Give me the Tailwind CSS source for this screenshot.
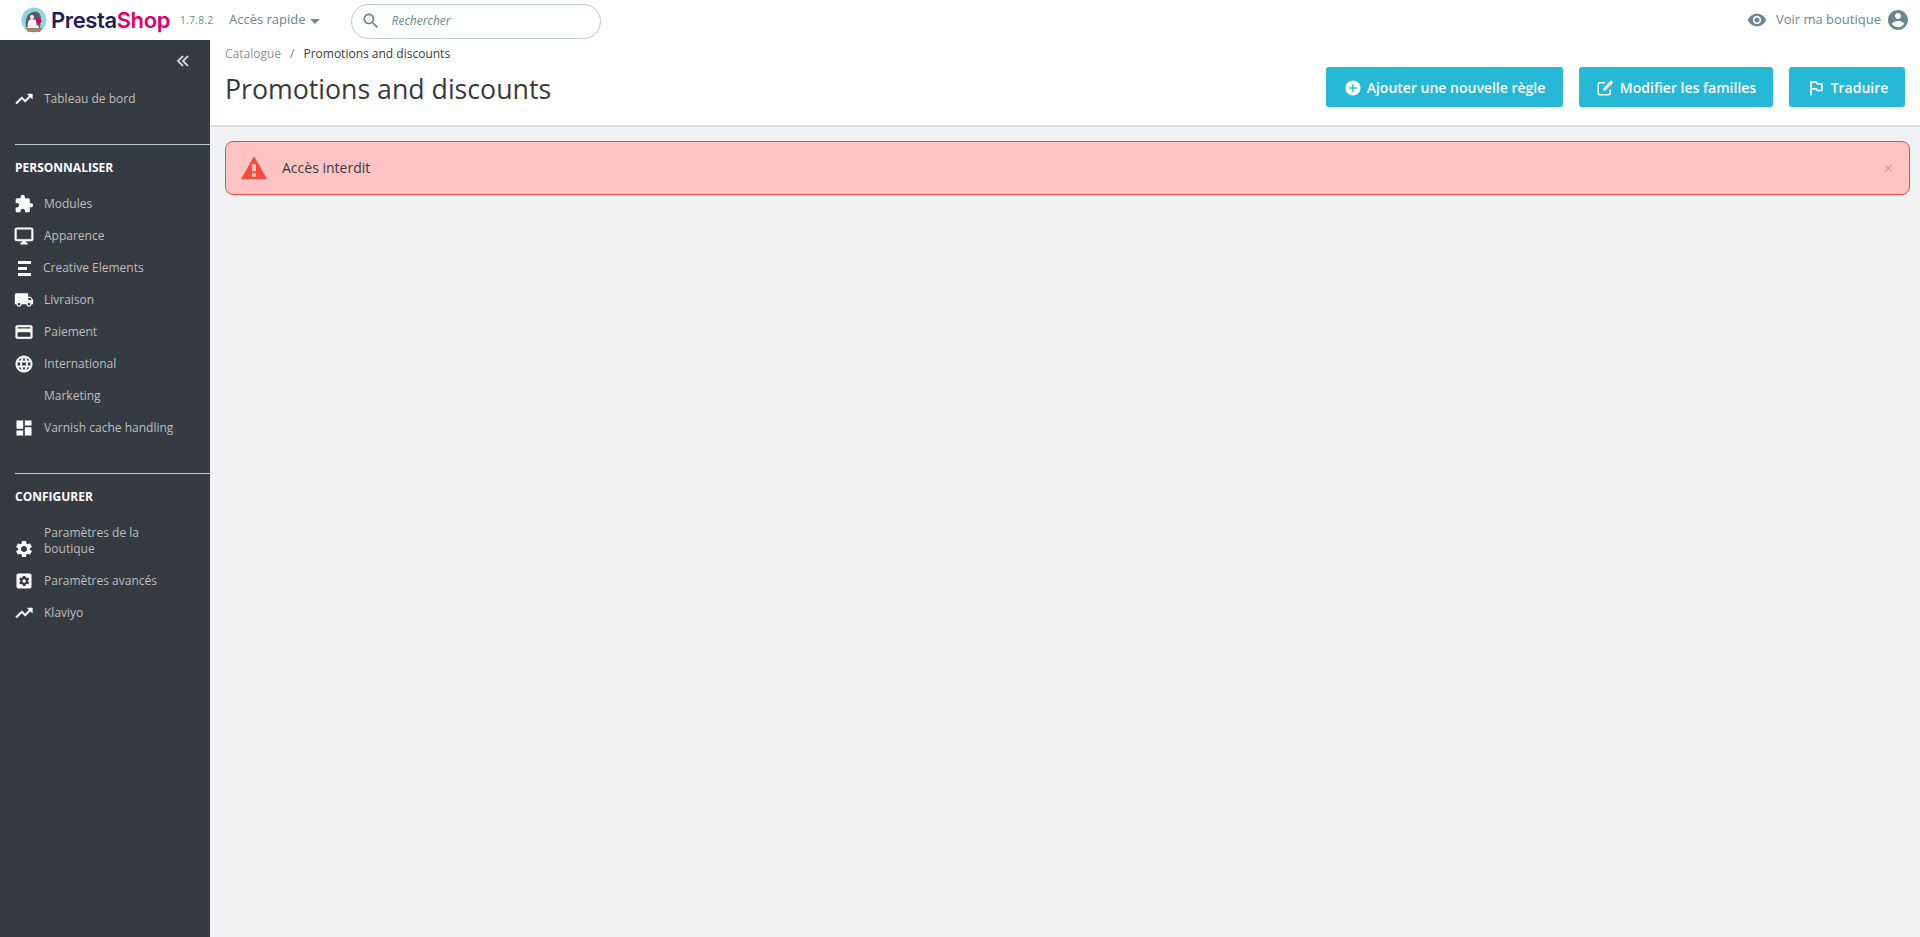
<!DOCTYPE html>
<html lang="fr">
<head>
    <meta charset="UTF-8">
    <meta name="viewport" content="width=device-width, initial-scale=1.0">
    <title>Promotions and discounts</title>
    <script src="https://cdn.jsdelivr.net/npm/@tailwindcss/browser@4"></script>
</head>
<body class="h-[937px] overflow-hidden bg-[#eff1f2] font-['Open_Sans',sans-serif] text-[#363a41]">
    <!-- Top bar -->
    <header class="flex h-10 items-center bg-white pr-[10px]">
        <svg class="ml-[21px] h-[26px] w-[26px] shrink-0" viewBox="0 0 26 26">
            <circle cx="13" cy="13" r="12.5" fill="#8fd3e4"/>
            <path d="M5 20c-1-7 1-14 7-15 5-1 8 2 8 6l-1 10z" fill="#5a5f66"/>
            <path d="M7 21c-1-4 0-8 3-9l6 1 2 8z" fill="#f3f3f3"/>
            <circle cx="11" cy="10" r="2" fill="#f3f3f3"/>
            <path d="M14 9l7 5-5 5z" fill="#df0067"/>
            <path d="M4 21h18l-3 4H7z" fill="#a0896b"/>
        </svg>
        <span class="ml-1 w-[122px] shrink-0 font-['Inter',sans-serif] text-[22px] leading-none font-semibold tracking-[-0.4px] text-[#251b5b]">Presta<span class="text-[#df0067]">Shop</span></span>
        <span class="ml-[7px] w-[49px] shrink-0 text-[10px] tracking-[0.4px] text-[#6c868e]">1.7.8.2</span>
        <button class="flex items-center text-[13px] text-[#6c868e]">Accès rapide<span class="ml-1 mt-0.5 border-x-[5px] border-t-[5px] border-x-transparent border-t-[#6c868e]"></span></button>
        <div class="mt-[2px] ml-[31px] flex h-[35px] w-[250px] items-center rounded-full border border-[#bbcdd2] pl-[9px]">
            <svg class="h-5 w-5 fill-[#6c868e]" viewBox="0 0 24 24"><path d="M15.5 14h-.79l-.28-.27C15.41 12.59 16 11.11 16 9.5 16 5.91 13.09 3 9.5 3S3 5.91 3 9.5 5.91 16 9.5 16c1.61 0 3.09-.59 4.23-1.57l.27.28v.79l5 4.99L20.49 19l-4.99-5zm-6 0C7.01 14 5 11.99 5 9.5S7.01 5 9.5 5 14 7.01 14 9.5 11.99 14 9.5 14z"/></svg>
            <span class="ml-[11px] text-xs text-[#6c868e] italic">Rechercher</span>
        </div>
        <div class="ml-auto flex items-center text-[13px] text-[#6c868e]">
            <svg class="mr-[9px] h-5 w-5 fill-[#6c868e]" viewBox="0 0 24 24"><path d="M12 4.5C7 4.5 2.73 7.61 1 12c1.73 4.39 6 7.5 11 7.5s9.27-3.11 11-7.5c-1.73-4.39-6-7.5-11-7.5zM12 17c-2.76 0-5-2.24-5-5s2.24-5 5-5 5 2.24 5 5-2.24 5-5 5zm0-8c-1.66 0-3 1.34-3 3s1.34 3 3 3 3-1.34 3-3-1.34-3-3-3z"/></svg>
            Voir ma boutique
            <svg class="ml-[5px] h-6 w-6 fill-[#6c868e]" viewBox="0 0 24 24"><path d="M12 2C6.48 2 2 6.48 2 12s4.48 10 10 10 10-4.48 10-10S17.52 2 12 2zm0 3c1.66 0 3 1.34 3 3s-1.34 3-3 3-3-1.34-3-3 1.34-3 3-3zm0 14.2c-2.5 0-4.71-1.28-6-3.22.03-1.99 4-3.08 6-3.08 1.99 0 5.97 1.09 6 3.08-1.29 1.94-3.5 3.22-6 3.22z"/></svg>
        </div>
    </header>

    <div class="flex h-[897px]">
        <!-- Sidebar -->
        <aside class="w-[210px] shrink-0 bg-[#363a41] text-xs text-[#bebebe]">
            <div class="flex h-[43px] items-end justify-end pr-[20px] pb-[15px]">
                <svg class="h-[14px] w-[14px] fill-none stroke-[#d0d0d0] stroke-[2]" viewBox="0 0 14 14"><path d="M7 2L2 7l5 5M12 2L7 7l5 5"/></svg>
            </div>
            <a class="flex h-8 items-center pl-[14px]">
                <svg class="h-5 w-5 shrink-0 fill-white stroke-white stroke-[0.6]" viewBox="0 0 24 24"><path d="M16 6l2.29 2.29-4.88 4.88-4-4L2 16.59 3.41 18l6-6 4 4 6.3-6.29L22 12V6z"/></svg>
                <span class="ml-[10px]">Tableau de bord</span>
            </a>

            <div class="mt-[29px] ml-[15px] h-px bg-[#bbcdd2]"></div>
            <div class="mt-[14px] ml-[15px] h-[18px] text-xs leading-[18px] font-bold text-white">PERSONNALISER</div>
            <nav class="mt-[11px]">
                <a class="flex h-8 items-center pl-[14px]">
                    <svg class="h-5 w-5 shrink-0 fill-white" viewBox="0 0 24 24"><path d="M20.5 11H19V7c0-1.1-.9-2-2-2h-4V3.5C13 2.12 11.88 1 10.5 1S8 2.12 8 3.5V5H4c-1.1 0-1.99.9-1.99 2v3.8H3.5c1.49 0 2.7 1.21 2.7 2.7s-1.21 2.7-2.7 2.7H2V20c0 1.1.9 2 2 2h3.8v-1.5c0-1.49 1.21-2.7 2.7-2.7 1.49 0 2.7 1.21 2.7 2.7V22H17c1.1 0 2-.9 2-2v-4h1.5c1.38 0 2.5-1.12 2.5-2.5S21.88 11 20.5 11z"/></svg>
                    <span class="ml-[10px]">Modules</span>
                </a>
                <a class="flex h-8 items-center pl-[14px]">
                    <svg class="h-5 w-5 shrink-0 fill-white stroke-white stroke-[0.5]" viewBox="0 0 24 24"><path d="M21 2H3c-1.1 0-2 .9-2 2v12c0 1.1.9 2 2 2h7v2H8v2h8v-2h-2v-2h7c1.1 0 2-.9 2-2V4c0-1.1-.9-2-2-2zm0 14H3V4h18v12z"/></svg>
                    <span class="ml-[10px]">Apparence</span>
                </a>
                <a class="flex h-8 items-center pl-[18px]">
                    <span class="flex w-[13px] shrink-0 flex-col gap-[3px]">
                        <span class="h-[3px] w-[13px] bg-white"></span>
                        <span class="h-[3px] w-[9px] bg-white"></span>
                        <span class="h-[3px] w-[13px] bg-white"></span>
                    </span>
                    <span class="ml-3">Creative Elements</span>
                </a>
                <a class="flex h-8 items-center pl-[14px]">
                    <svg class="h-5 w-5 shrink-0 fill-white" viewBox="0 0 24 24"><path d="M20 8h-3V4H3c-1.1 0-2 .9-2 2v11h2c0 1.66 1.34 3 3 3s3-1.34 3-3h6c0 1.66 1.34 3 3 3s3-1.34 3-3h2v-5l-3-4zM6 18.5c-.83 0-1.5-.67-1.5-1.5s.67-1.5 1.5-1.5 1.5.67 1.5 1.5-.67 1.5-1.5 1.5zm13.5-9l1.96 2.5H17V9.5h2.5zm-1.5 9c-.83 0-1.5-.67-1.5-1.5s.67-1.5 1.5-1.5 1.5.67 1.5 1.5-.67 1.5-1.5 1.5z"/></svg>
                    <span class="ml-[10px]">Livraison</span>
                </a>
                <a class="flex h-8 items-center pl-[14px]">
                    <svg class="h-5 w-5 shrink-0 fill-white stroke-white stroke-[0.5]" viewBox="0 0 24 24"><path d="M20 4H4c-1.11 0-1.99.89-1.99 2L2 18c0 1.11.89 2 2 2h16c1.11 0 2-.89 2-2V6c0-1.11-.89-2-2-2zm0 14H4v-6h16v6zm0-10H4V6h16v2z"/></svg>
                    <span class="ml-[10px]">Paiement</span>
                </a>
                <a class="flex h-8 items-center pl-[14px]">
                    <svg class="h-5 w-5 shrink-0 fill-white stroke-white stroke-[0.4]" viewBox="0 0 24 24"><path d="M11.99 2C6.47 2 2 6.48 2 12s4.47 10 9.99 10C17.52 22 22 17.52 22 12S17.52 2 11.99 2zm6.93 6h-2.95c-.32-1.25-.78-2.45-1.38-3.56 1.84.63 3.37 1.91 4.33 3.56zM12 4.04c.83 1.2 1.48 2.53 1.91 3.96h-3.82c.43-1.43 1.08-2.76 1.91-3.96zM4.26 14C4.1 13.36 4 12.69 4 12s.1-1.36.26-2h3.38c-.08.66-.14 1.32-.14 2 0 .68.06 1.34.14 2H4.26zm.82 2h2.95c.32 1.25.78 2.45 1.38 3.56-1.84-.63-3.37-1.9-4.33-3.56zm2.95-8H5.08c.96-1.66 2.49-2.93 4.33-3.56C8.81 5.55 8.35 6.75 8.03 8zM12 19.96c-.83-1.2-1.48-2.53-1.91-3.96h3.82c-.43 1.43-1.08 2.76-1.91 3.96zM14.34 14H9.66c-.09-.66-.16-1.32-.16-2 0-.68.07-1.35.16-2h4.68c.09.65.16 1.32.16 2 0 .68-.07 1.34-.16 2zm.25 5.56c.6-1.11 1.06-2.31 1.38-3.56h2.95c-.96 1.65-2.49 2.93-4.33 3.56zM16.36 14c.08-.66.14-1.32.14-2 0-.68-.06-1.34-.14-2h3.38c.16.64.26 1.31.26 2s-.1 1.36-.26 2h-3.38z"/></svg>
                    <span class="ml-[10px]">International</span>
                </a>
                <a class="flex h-8 items-center pl-[44px]">Marketing</a>
                <a class="flex h-8 items-center pl-[14px]">
                    <svg class="h-5 w-5 shrink-0 fill-white" viewBox="0 0 24 24"><path d="M3 13h8V3H3v10zm0 8h8v-6H3v6zm10 0h8V11h-8v10zm0-18v6h8V3h-8z"/></svg>
                    <span class="ml-[10px]">Varnish cache handling</span>
                </a>
            </nav>

            <div class="mt-[29px] ml-[15px] h-px bg-[#bbcdd2]"></div>
            <div class="mt-[14px] ml-[15px] h-[18px] text-xs leading-[18px] font-bold text-white">CONFIGURER</div>
            <nav class="mt-[11px]">
                <a class="flex h-12 items-center pl-[14px]">
                    <svg class="mt-4 h-5 w-5 shrink-0 fill-white" viewBox="0 0 24 24"><path d="M19.14 12.94c.04-.3.06-.61.06-.94 0-.32-.02-.64-.07-.94l2.03-1.58c.18-.14.23-.41.12-.61l-1.92-3.32c-.12-.22-.37-.29-.59-.22l-2.39.96c-.5-.38-1.03-.7-1.62-.94l-.36-2.54c-.04-.24-.24-.41-.48-.41h-3.84c-.24 0-.43.17-.47.41l-.36 2.54c-.59.24-1.13.57-1.62.94l-2.39-.96c-.22-.08-.47 0-.59.22L2.74 8.87c-.12.21-.08.47.12.61l2.03 1.58c-.05.3-.09.63-.09.94s.02.64.07.94l-2.03 1.58c-.18.14-.23.41-.12.61l1.92 3.32c.12.22.37.29.59.22l2.39-.96c.5.38 1.03.7 1.62.94l.36 2.54c.05.24.24.41.48.41h3.84c.24 0 .44-.17.47-.41l.36-2.54c.59-.24 1.13-.56 1.62-.94l2.39.96c.22.08.47 0 .59-.22l1.92-3.32c.12-.22.07-.47-.12-.61l-2.01-1.58zM12 15.6c-1.98 0-3.6-1.62-3.6-3.6s1.62-3.6 3.6-3.6 3.6 1.62 3.6 3.6-1.62 3.6-3.6 3.6z"/></svg>
                    <span class="ml-[10px] w-[110px] leading-4">Paramètres de la boutique</span>
                </a>
                <a class="flex h-8 items-center pl-[14px]">
                    <svg class="h-5 w-5 shrink-0" viewBox="0 0 24 24">
                        <rect x="3" y="3" width="18" height="18" rx="2" fill="#fff"/>
                        <path fill="#363a41" d="M17 12c0-.3 0-.5-.1-.8l1.4-1.1-1.4-2.4-1.6.7c-.4-.3-.9-.6-1.4-.8L13.6 6h-2.8l-.3 1.6c-.5.2-1 .5-1.4.8l-1.6-.7-1.4 2.4 1.4 1.1c0 .3-.1.5-.1.8s0 .5.1.8l-1.4 1.1 1.4 2.4 1.6-.7c.4.3.9.6 1.4.8l.3 1.6h2.8l.3-1.6c.5-.2 1-.5 1.4-.8l1.6.7 1.4-2.4-1.4-1.1c.1-.3.1-.5.1-.8zm-4.8 2a2 2 0 110-4 2 2 0 010 4z"/>
                    </svg>
                    <span class="ml-[10px]">Paramètres avancés</span>
                </a>
                <a class="flex h-8 items-center pl-[14px]">
                    <svg class="h-5 w-5 shrink-0 fill-white stroke-white stroke-[0.6]" viewBox="0 0 24 24"><path d="M16 6l2.29 2.29-4.88 4.88-4-4L2 16.59 3.41 18l6-6 4 4 6.3-6.29L22 12V6z"/></svg>
                    <span class="ml-[10px]">Klaviyo</span>
                </a>
            </nav>
        </aside>

        <main class="min-w-0 flex-1">
            <!-- Page head -->
            <div class="h-[87px] border-b-2 border-[#dfe1e3] bg-white pr-[15px] pl-[15px]">
                <div class="flex h-[28px] items-center text-xs">
                    <span class="text-[#8a9599]">Catalogue</span>
                    <span class="mx-[9px] text-[#6c868e]">/</span>
                    <span>Promotions and discounts</span>
                </div>
                <div class="flex items-center justify-between">
                    <h1 class="pt-[2px] text-[26.7px] leading-[38px] font-normal">Promotions and discounts</h1>
                    <div class="flex -translate-y-[1px] gap-4">
                        <a class="flex h-10 w-[237px] items-center justify-center rounded-[3px] bg-[#25b9d7] pt-[1px] text-sm font-semibold text-white">
                            <svg class="mr-[5px] h-[18px] w-[18px] fill-white" viewBox="0 0 24 24"><path d="M12 2C6.48 2 2 6.48 2 12s4.48 10 10 10 10-4.48 10-10S17.52 2 12 2zm5 11h-4v4h-2v-4H7v-2h4V7h2v4h4v2z"/></svg>
                            Ajouter une nouvelle règle
                        </a>
                        <a class="flex h-10 w-[194px] items-center justify-center rounded-[3px] bg-[#25b9d7] pt-[1px] text-sm font-semibold text-white">
                            <svg class="mr-[6px] h-[18px] w-[18px] fill-none stroke-white stroke-2" viewBox="0 0 24 24"><path d="M19 14v5a2 2 0 01-2 2H5a2 2 0 01-2-2V7a2 2 0 012-2h7"/><path fill="#fff" stroke="none" d="M20 1.5l3 3L13 15l-4 1 1-4z"/></svg>
                            Modifier les familles
                        </a>
                        <a class="flex h-10 w-[116px] items-center justify-center rounded-[3px] bg-[#25b9d7] pt-[1px] text-sm font-semibold text-white">
                            <svg class="mr-[5px] h-5 w-5 fill-white" viewBox="0 0 24 24"><path d="M14 6l-1-2H5v17h2v-7h5l1 2h7V6h-6zm4 8h-4l-1-2H7V6h5l1 2h5v6z"/></svg>
                            Traduire
                        </a>
                    </div>
                </div>
            </div>

            <!-- Alert -->
            <div class="mt-[14px] mr-[10px] ml-[15px] flex h-[54px] items-center rounded-[8px] border border-[#f54c3e] bg-[#fec4c3] pr-[16px] pl-[13px] text-sm">
                <svg class="h-[30px] w-[30px] shrink-0 fill-[#f54c3e]" viewBox="0 0 24 24"><path fill-rule="evenodd" d="M12 2.5L1.5 21h21zM13.6 19h-3.2v-3h3.2zM13.6 14.5h-3.2V9h3.2z"/></svg>
                <span class="ml-[13px]">Accès interdit</span>
                <span class="ml-auto text-base leading-none text-[#363a41]/30">×</span>
            </div>
        </main>
    </div>
</body>
</html>
